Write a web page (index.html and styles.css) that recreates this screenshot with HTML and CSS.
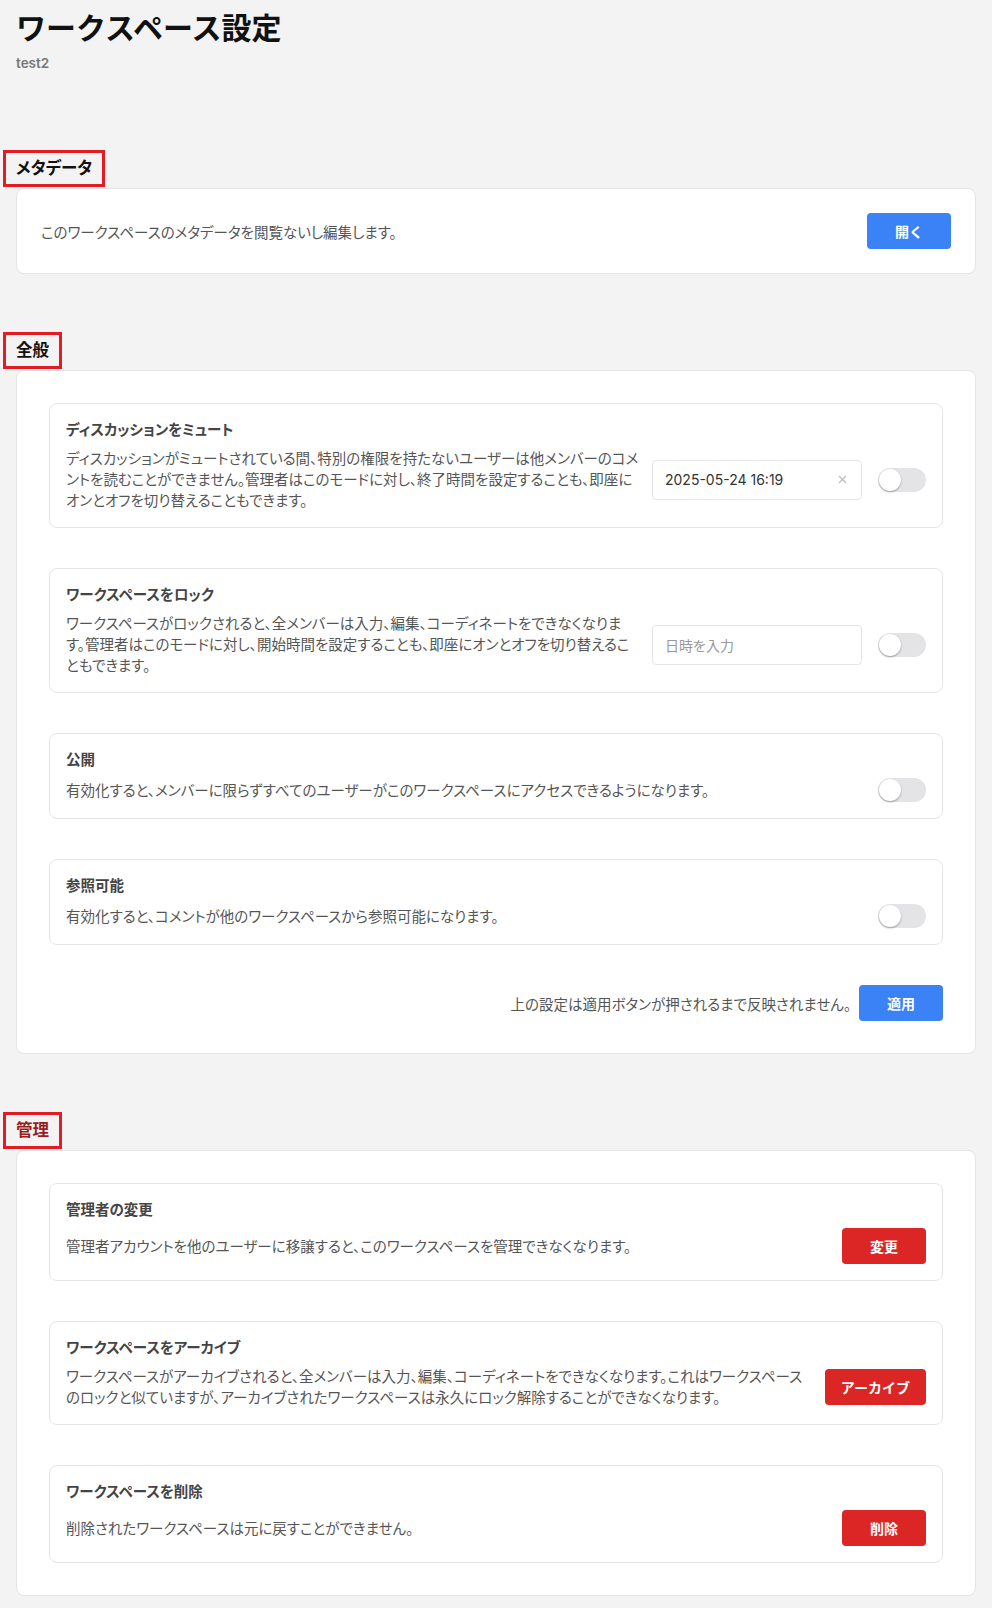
FILE: index.html
```html
<html>
<head>
    <meta charset="utf-8">
    <link rel="stylesheet" href="styles.css">
</head>
<body>
    <div class="page">
        <header class="page-header">
            <h1 class="page-title">ワークスペース設定</h1>
            <p class="page-sub">test2</p>
        </header>

        <section class="section">
            <h2 class="section-title">メタデータ</h2>
            <div class="card card-meta">
                <p class="card-text">このワークスペースのメタデータを閲覧ないし編集します。</p>
                <button class="btn btn-blue">開く</button>
            </div>
        </section>

        <section class="section">
            <h2 class="section-title">全般</h2>
            <div class="card card-list">
                <div class="item">
                    <div class="item-title">ディスカッションをミュート</div>
                    <div class="item-row">
                        <p class="item-desc">ディスカッションがミュートされている間、特別の権限を持たないユーザーは他メンバーのコメントを読むことができません。管理者はこのモードに対し、終了時間を設定することも、即座にオンとオフを切り替えることもできます。</p>
                        <div class="date-input">
                            <span class="date-value">2025-05-24 16:19</span>
                            <svg class="date-clear" width="9" height="9" viewBox="0 0 9 9"><path d="M1 1L8 8M8 1L1 8" stroke="#bdbdbd" stroke-width="1.3" fill="none"/></svg>
                        </div>
                        <span class="toggle"><span class="toggle-knob"></span></span>
                    </div>
                </div>

                <div class="item">
                    <div class="item-title">ワークスペースをロック</div>
                    <div class="item-row">
                        <p class="item-desc">ワークスペースがロックされると、全メンバーは入力、編集、コーディネートをできなくなります。管理者はこのモードに対し、開始時間を設定することも、即座にオンとオフを切り替えることもできます。</p>
                        <div class="date-input">
                            <span class="date-placeholder">日時を入力</span>
                        </div>
                        <span class="toggle"><span class="toggle-knob"></span></span>
                    </div>
                </div>

                <div class="item">
                    <div class="item-title">公開</div>
                    <div class="item-row">
                        <p class="item-desc">有効化すると、メンバーに限らずすべてのユーザーがこのワークスペースにアクセスできるようになります。</p>
                        <span class="toggle"><span class="toggle-knob"></span></span>
                    </div>
                </div>

                <div class="item">
                    <div class="item-title">参照可能</div>
                    <div class="item-row">
                        <p class="item-desc">有効化すると、コメントが他のワークスペースから参照可能になります。</p>
                        <span class="toggle"><span class="toggle-knob"></span></span>
                    </div>
                </div>

                <div class="apply-row">
                    <span>上の設定は適用ボタンが押されるまで反映されません。</span>
                    <button class="btn btn-blue">適用</button>
                </div>
            </div>
        </section>

        <section class="section section-danger">
            <h2 class="section-title">管理</h2>
            <div class="card card-list">
                <div class="item">
                    <div class="item-title">管理者の変更</div>
                    <div class="item-row">
                        <p class="item-desc">管理者アカウントを他のユーザーに移譲すると、このワークスペースを管理できなくなります。</p>
                        <button class="btn btn-red">変更</button>
                    </div>
                </div>

                <div class="item">
                    <div class="item-title">ワークスペースをアーカイブ</div>
                    <div class="item-row">
                        <p class="item-desc">ワークスペースがアーカイブされると、全メンバーは入力、編集、コーディネートをできなくなります。これはワークスペースのロックと似ていますが、アーカイブされたワークスペースは永久にロック解除することができなくなります。</p>
                        <button class="btn btn-red">アーカイブ</button>
                    </div>
                </div>

                <div class="item">
                    <div class="item-title">ワークスペースを削除</div>
                    <div class="item-row">
                        <p class="item-desc">削除されたワークスペースは元に戻すことができません。</p>
                        <button class="btn btn-red">削除</button>
                    </div>
                </div>
            </div>
        </section>
    </div>
</body>
</html>
```

FILE: styles.css
```css
body {
    margin: 0;
    background-color: #f3f3f3;
    font-family: Inter, "Noto Sans CJK JP", sans-serif;
    font-feature-settings: "palt";
    color: #111;
}

.page {
    padding: 10px 16px 13px;
}

.page-header {
    margin-bottom: 77px;
}

.page-title {
    margin: 0;
    font-size: 30px;
    line-height: 36px;
    font-weight: 700;
    font-feature-settings: normal;
}

.page-sub {
    margin: 7px 0 0;
    font-size: 13.5px;
    line-height: 20px;
    font-weight: 600;
    color: #777;
}

.section + .section {
    margin-top: 58px;
}

.section-title {
    width: fit-content;
    margin: 0 0 1px -13px;
    padding: 3px 10px;
    border: 3px solid #e31b23;
    font-size: 16.5px;
    line-height: 25px;
    font-weight: 700;
}

.section-danger .section-title {
    color: #9b1c1c;
}

.card {
    background-color: #fff;
    border: 1px solid #e5e5e5;
    border-radius: 8px;
}

.card-meta {
    display: flex;
    align-items: center;
    justify-content: space-between;
    padding: 24px;
}

.card-text {
    margin: 0;
    font-size: 14.5px;
    color: #555;
}

.card-list {
    display: flex;
    flex-direction: column;
    gap: 40px;
    padding: 32px;
}

.item {
    border: 1px solid #e5e5e5;
    border-radius: 8px;
    padding: 16px;
}

.item-title {
    font-size: 14.5px;
    line-height: 20px;
    font-weight: 700;
    color: #444;
}

.item-row {
    display: flex;
    align-items: center;
    margin-top: 8px;
}

.item-desc {
    flex: 1;
    margin: 0;
    font-size: 14.5px;
    line-height: 21px;
    color: #555;
}

.date-input {
    display: flex;
    align-items: center;
    justify-content: space-between;
    flex-shrink: 0;
    box-sizing: border-box;
    width: 210px;
    height: 40px;
    margin-left: 13px;
    padding: 0 12px;
    border: 1px solid #e5e5e5;
    border-radius: 4px;
    font-size: 14px;
    color: #333;
}

.date-placeholder {
    color: #999;
}

.date-clear {
    margin-right: 2px;
}

.toggle {
    display: flex;
    align-items: center;
    flex-shrink: 0;
    box-sizing: border-box;
    width: 48px;
    height: 24px;
    margin-left: 16px;
    padding: 1px;
    border-radius: 12px;
    background-color: #e4e4e7;
}

.toggle-knob {
    width: 22px;
    height: 22px;
    border-radius: 50%;
    background-color: #fff;
    box-shadow: 0 1px 2px rgba(0, 0, 0, 0.35);
}

.btn {
    flex-shrink: 0;
    height: 36px;
    min-width: 84px;
    margin-left: 16px;
    padding: 0 16px;
    border: none;
    border-radius: 4px;
    font-family: inherit;
    font-size: 14px;
    font-weight: 700;
    color: #fff;
    cursor: pointer;
}

.btn-blue {
    background-color: #3b82f6;
}

.btn-red {
    background-color: #dc2626;
}

.apply-row {
    display: flex;
    align-items: center;
    justify-content: flex-end;
    font-size: 14.5px;
    color: #555;
}

.apply-row .btn {
    margin-left: 8px;
}
```
